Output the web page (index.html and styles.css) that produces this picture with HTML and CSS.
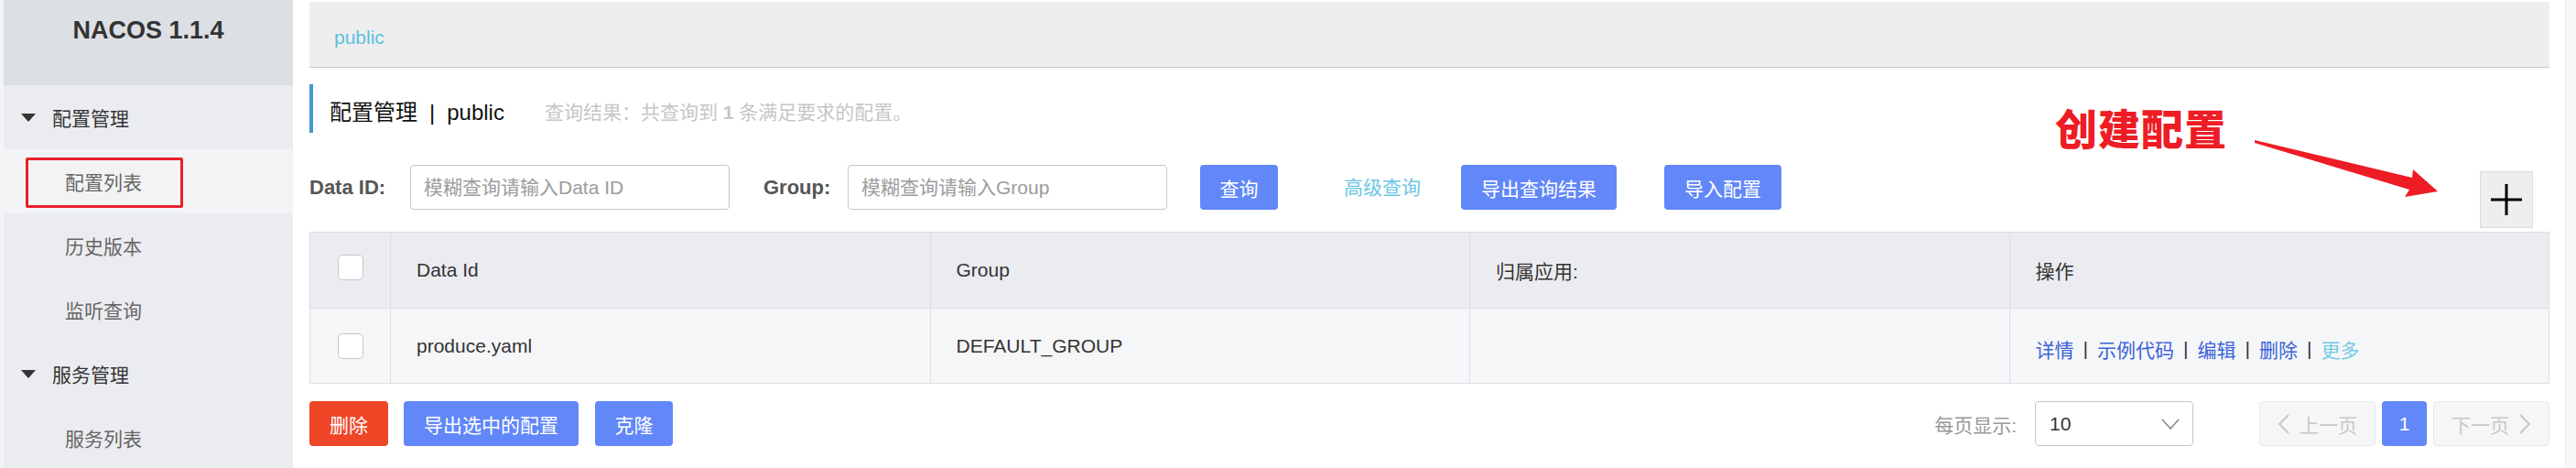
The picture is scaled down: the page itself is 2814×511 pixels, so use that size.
FILE: index.html
```html
<!DOCTYPE html>
<html lang="zh-CN">
<head>
<meta charset="utf-8">
<title>Nacos 配置列表</title>
<link rel="stylesheet" href="styles.css">
</head>
<body>
<div class="app">
  <aside class="sidebar">
    <div class="brand">NACOS 1.1.4</div>
    <div class="menu-group"><span class="caret"></span>配置管理</div>
    <div class="menu-item active">配置列表<span class="annot-box"></span></div>
    <div class="menu-item">历史版本</div>
    <div class="menu-item">监听查询</div>
    <div class="menu-group"><span class="caret"></span>服务管理</div>
    <div class="menu-item">服务列表</div>
  </aside>

  <main class="main">
    <div class="breadcrumb"><span class="crumb">public</span></div>

    <div class="title-row">
      <span class="title">配置管理<span class="title-sep">|</span>public</span>
      <span class="result">查询结果：共查询到 <b>1</b> 条满足要求的配置。</span>
    </div>

    <div class="search-row">
      <span class="label">Data ID:</span>
      <div class="input">模糊查询请输入Data ID</div>
      <span class="label label-group">Group:</span>
      <div class="input">模糊查询请输入Group</div>
      <button class="btn btn-primary btn-query">查询</button>
      <span class="adv-link">高级查询</span>
      <button class="btn btn-primary btn-export">导出查询结果</button>
      <button class="btn btn-primary btn-import">导入配置</button>
      <button class="btn-add" aria-label="创建配置">
        <svg width="36" height="36" viewBox="0 0 36 36"><path d="M18 1V35M1 18H35" stroke="#000" stroke-width="3" fill="none"/></svg>
      </button>
    </div>

    <div class="table">
      <div class="cell head check"><span class="checkbox"></span></div>
      <div class="cell head">Data Id</div>
      <div class="cell head">Group</div>
      <div class="cell head">归属应用:</div>
      <div class="cell head">操作</div>

      <div class="cell body check"><span class="checkbox"></span></div>
      <div class="cell body">produce.yaml</div>
      <div class="cell body">DEFAULT_GROUP</div>
      <div class="cell body"></div>
      <div class="cell body ops">
        <span class="op">详情</span><span class="op-sep">|</span><span class="op">示例代码</span><span class="op-sep">|</span><span class="op">编辑</span><span class="op-sep">|</span><span class="op">删除</span><span class="op-sep">|</span><span class="op op-more">更多</span>
      </div>
    </div>

    <div class="footer-row">
      <button class="btn btn-danger">删除</button>
      <button class="btn btn-primary btn-export-sel">导出选中的配置</button>
      <button class="btn btn-primary btn-clone">克隆</button>

      <div class="pager">
        <span class="page-size-label">每页显示:</span>
        <div class="select"><span>10</span>
          <svg width="20" height="12" viewBox="0 0 20 12"><path d="M1 1L10 11L19 1" stroke="#888" stroke-width="1.6" fill="none"/></svg>
        </div>
        <div class="page-btn disabled prev">
          <svg width="14" height="24" viewBox="0 0 14 24"><path d="M12 2L2 12L12 22" stroke="#c8c8c8" stroke-width="2" fill="none"/></svg>
          <span>上一页</span>
        </div>
        <div class="page-num">1</div>
        <div class="page-btn disabled next">
          <span>下一页</span>
          <svg width="14" height="24" viewBox="0 0 14 24"><path d="M2 2L12 12L2 22" stroke="#c8c8c8" stroke-width="2" fill="none"/></svg>
        </div>
      </div>
    </div>
  </main>

  <div class="scrollbar"></div>
</div>

<div class="annot-text">创建配置</div>
<svg class="annot-arrow" width="240" height="100" viewBox="0 0 240 100">
  <polygon points="23,23 195,64 196,55 223,79 187,85 192,77 23,26" fill="#ee1c25"/>
</svg>
</body>
</html>
```

FILE: styles.css
```css
* { box-sizing: border-box; }

html, body {
  margin: 0;
  padding: 0;
  background: #ffffff;
}

body {
  width: 2814px;
  height: 511px;
  overflow: hidden;
  position: relative;
  font-family: "Liberation Sans", "Noto Sans CJK SC", sans-serif;
  font-size: 21px;
  color: #333333;
}

.app {
  display: flex;
  height: 511px;
}

/* ---------- sidebar ---------- */
.sidebar {
  width: 320px;
  flex: none;
  border-left: 4px solid #f3f4f6;
  background: #ebecf0;
}

.brand {
  height: 93px;
  background: #dcdfe4;
  text-align: center;
  font-weight: bold;
  font-size: 27px;
  line-height: 66px;
  color: #333333;
}

.menu-group {
  height: 70px;
  display: flex;
  align-items: center;
  padding-left: 19px;
  color: #333333;
}

.caret {
  width: 0;
  height: 0;
  border-left: 8.5px solid transparent;
  border-right: 8.5px solid transparent;
  border-top: 9px solid #333333;
  margin-right: 18px;
}

.menu-item {
  height: 70px;
  display: flex;
  align-items: center;
  padding-left: 67px;
  color: #666666;
  position: relative;
}

.menu-item.active {
  background: #f2f3f5;
}

.annot-box {
  position: absolute;
  left: 24px;
  top: 9px;
  width: 172px;
  height: 55px;
  border: 3px solid #e8202a;
  border-radius: 2px;
}

/* ---------- main ---------- */
.main {
  flex: 1;
  padding: 0 17px 0 18px;
  min-width: 0;
}

.breadcrumb {
  margin-top: 2px;
  height: 72px;
  background: #eeeeee;
  border-bottom: 1px solid #c8c8c8;
  display: flex;
  align-items: center;
  padding: 6px 0 0 27px;
}

.crumb {
  color: #5fbfdf;
  font-size: 21px;
}

.title-row {
  margin-top: 18px;
  height: 53px;
  border-left: 4px solid #4399cf;
  padding-left: 18px;
  display: flex;
  align-items: center;
  padding-top: 4px;
}

.title {
  font-size: 24px;
  color: #111111;
}

.title-sep {
  margin: 0 13px;
}

.result {
  margin-left: 44px;
  color: #c6c6c6;
  font-size: 21px;
}

.result b {
  font-weight: bold;
}

/* ---------- search ---------- */
.search-row {
  margin-top: 35px;
  display: flex;
  align-items: flex-start;
}

.label {
  height: 49px;
  line-height: 49px;
  font-weight: bold;
  font-size: 22px;
  color: #555555;
  width: 88px;
  margin-right: 22px;
  white-space: nowrap;
}

.label-group {
  width: 70px;
  margin-left: 37px;
}

.input {
  width: 349px;
  height: 49px;
  border: 1px solid #c4c6cf;
  border-radius: 4px;
  padding-left: 14px;
  line-height: 47px;
  color: #9c9c9c;
  font-size: 21px;
  white-space: nowrap;
}

.btn {
  height: 49px;
  padding: 0 22px;
  border: none;
  border-radius: 4px;
  font-family: inherit;
  font-size: 21px;
  color: #ffffff;
  white-space: nowrap;
  flex: none;
}

.btn-primary { background: #6287f8; }
.btn-danger { background: #ee4627; }

.btn-query { margin-left: 36px; width: 85px; padding: 0; }

.adv-link {
  margin-left: 72px;
  height: 49px;
  line-height: 49px;
  color: #6cc6e3;
  font-size: 21px;
}

.btn-export { margin-left: 44px; width: 170px; padding: 0; }
.btn-import { margin-left: 52px; width: 128px; padding: 0; }

.btn-add {
  margin-left: auto;
  margin-right: 18px;
  margin-top: 7px;
  width: 58px;
  height: 62px;
  background: #eeeeee;
  border: 1px solid #dddddd;
  padding: 0;
  display: flex;
  align-items: center;
  justify-content: center;
}

/* ---------- table ---------- */
.table {
  margin-top: 4px;
  display: grid;
  grid-template-columns: 88px repeat(4, 1fr);
  border-top: 1px solid #dcdee3;
  border-left: 1px solid #dcdee3;
}

.cell {
  border-right: 1px solid #dcdee3;
  border-bottom: 1px solid #dcdee3;
  display: flex;
  align-items: center;
  padding-left: 28px;
  color: #333333;
  font-size: 21px;
  white-space: nowrap;
}

.cell.head {
  height: 83px;
  background: #ebecf0;
}

.cell.body {
  height: 82px;
  background: #f5f6f8;
}

.cell.check {
  padding-left: 0;
  justify-content: center;
}

.cell.head.check .checkbox { margin-top: -6px; }

.checkbox {
  width: 28px;
  height: 28px;
  border: 1px solid #c4c6cf;
  border-radius: 5px;
  background: #ffffff;
}

.ops { padding-top: 6px; }

.op { color: #3b62d8; }
.op-more { color: #74cae6; }
.op-sep {
  color: #333333;
  margin: 0 10px;
}

/* ---------- footer ---------- */
.footer-row {
  margin-top: 19px;
  display: flex;
  align-items: center;
}

.btn-export-sel { margin-left: 17px; width: 191px; padding: 0; }
.btn-clone { margin-left: 18px; width: 85px; padding: 0; }

.pager {
  margin-left: auto;
  display: flex;
  align-items: center;
}

.page-size-label {
  color: #999999;
  font-size: 21px;
  margin-right: 20px;
}

.select {
  width: 173px;
  height: 49px;
  border: 1px solid #c4c6cf;
  border-radius: 4px;
  display: flex;
  align-items: center;
  justify-content: space-between;
  padding: 0 14px 0 15px;
  color: #333333;
}

.page-btn {
  width: 127px;
  height: 49px;
  border: 1px solid #e6e7eb;
  border-radius: 4px;
  background: #f5f6f8;
  color: #c8c8c8;
  display: flex;
  align-items: center;
  justify-content: center;
  gap: 10px;
}

.page-btn.prev { margin-left: 72px; }

.page-num {
  width: 49px;
  height: 49px;
  margin: 0 7px;
  border-radius: 4px;
  background: #6287f8;
  color: #ffffff;
  display: flex;
  align-items: center;
  justify-content: center;
}

/* ---------- scrollbar ---------- */
.scrollbar {
  width: 12px;
  flex: none;
  background: #f7f7f7;
  border-left: 1px solid #ececec;
}

/* ---------- annotation overlay ---------- */
.annot-text {
  position: absolute;
  left: 2245px;
  top: 113px;
  font-family: "Noto Sans CJK SC", sans-serif;
  font-weight: 900;
  font-size: 46px;
  line-height: 1.1;
  letter-spacing: 1px;
  color: #ee1c25;
}

.annot-arrow {
  position: absolute;
  left: 2440px;
  top: 130px;
}
```
